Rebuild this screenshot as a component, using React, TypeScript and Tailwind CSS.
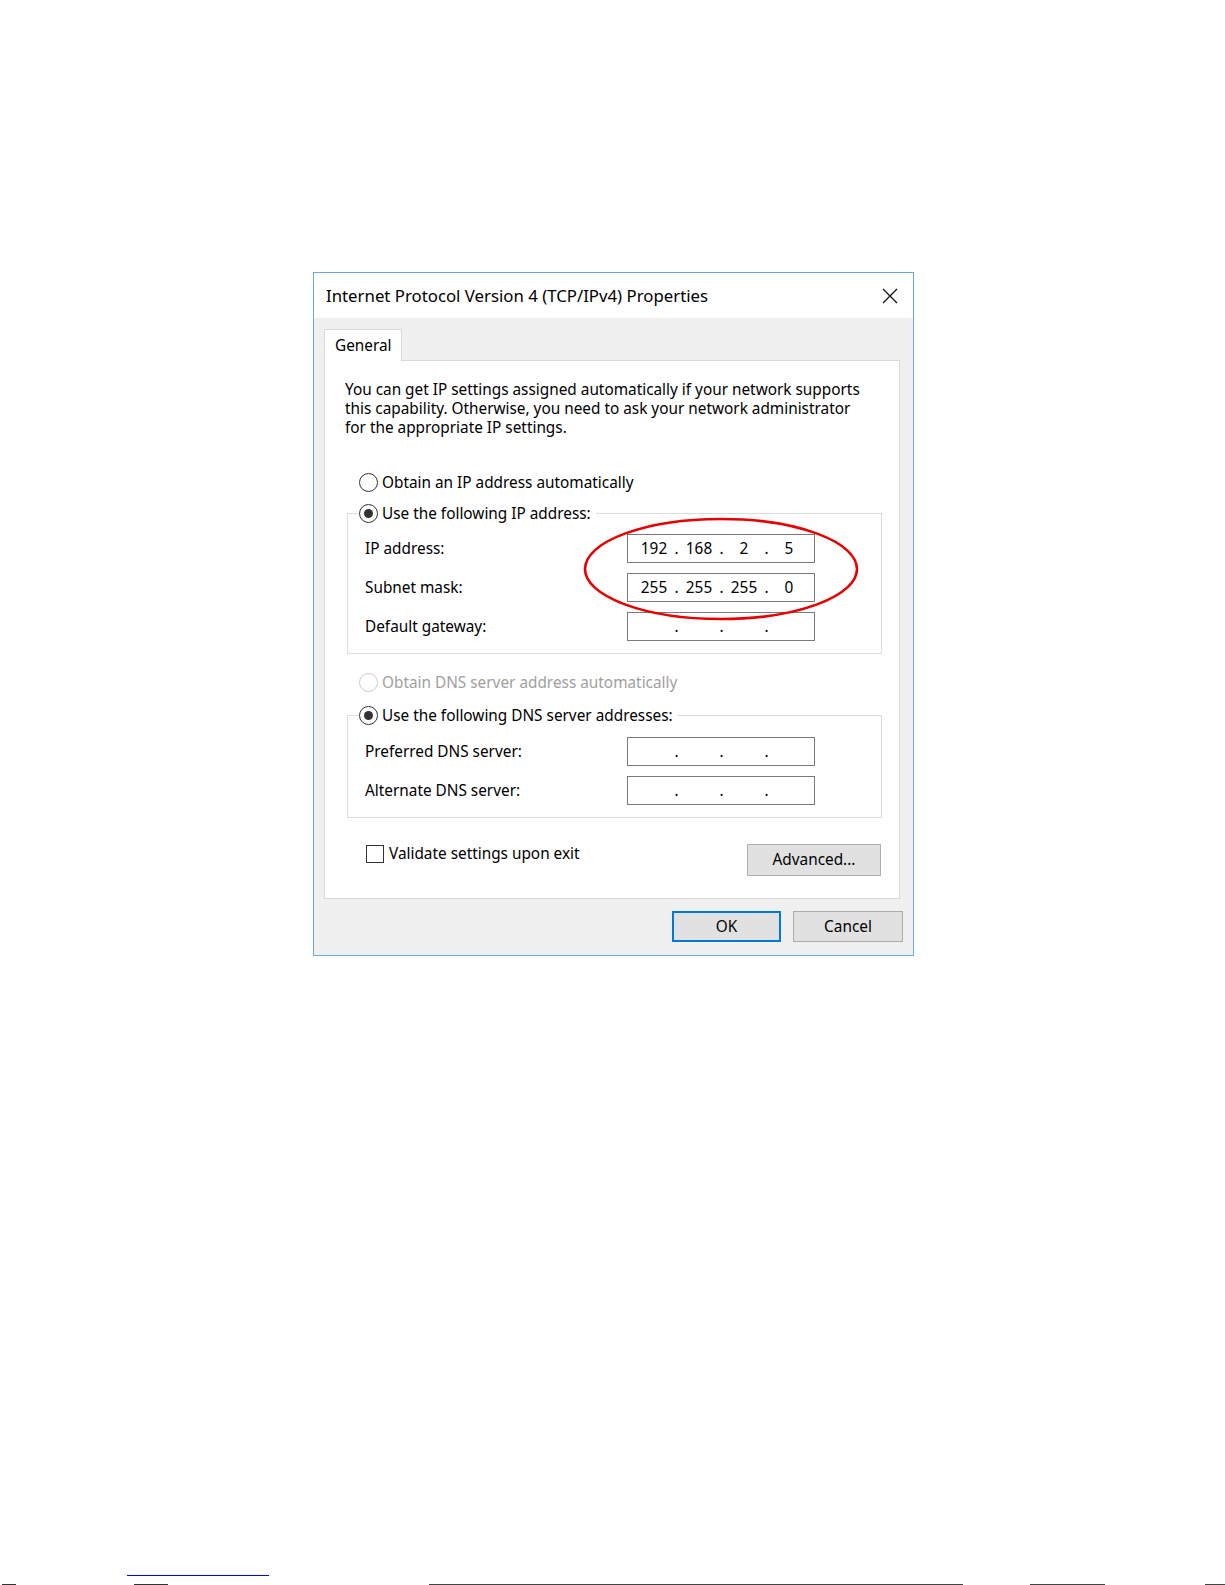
import React from "react";

const TITLE = "Internet Protocol Version 4 (TCP/IPv4) Properties";

function Radio({ checked = false, disabled = false }: { checked?: boolean; disabled?: boolean }) {
  return (
    <span
      className={
        disabled
          ? "flex h-[19px] w-[19px] shrink-0 items-center justify-center rounded-full border border-[#cccccc] bg-white"
          : "flex h-[19px] w-[19px] shrink-0 items-center justify-center rounded-full border border-[#333333] bg-white"
      }
    >
      {checked && <span className="h-[9px] w-[9px] rounded-full bg-[#333333]" />}
    </span>
  );
}

function IpBox({ parts }: { parts?: string[] }) {
  const p = parts ?? ["", "", "", ""];
  return (
    <div className="flex h-[29px] w-[188px] items-center border border-[#7a7a7a] bg-white pl-[8px]">
      {p.map((v, i) => (
        <React.Fragment key={i}>
          <span className="w-[36px] text-center">{v}</span>
          {i < 3 && <span className="w-[9px] text-center">.</span>}
        </React.Fragment>
      ))}
    </div>
  );
}

function Row({ label, parts }: { label: string; parts?: string[] }) {
  return (
    <div className="flex h-[29px] items-center">
      <span className="w-[262px]">{label}</span>
      <IpBox parts={parts} />
    </div>
  );
}

export default function App() {
  return (
    <div className="flex h-[1585px] w-full flex-col overflow-hidden bg-white pt-[272px] font-['Noto_Sans',sans-serif] text-[15.35px] text-black">
      <div className="relative ml-[313px] flex h-[684px] w-[601px] shrink-0 flex-col border border-[#6aaae4] bg-[#f0f0f0]">
        {/* title bar */}
        <div className="flex h-[45px] items-center justify-between bg-white pl-[12px] pr-[15px]">
          <span className="text-[16.8px]">{TITLE}</span>
          <svg width="16" height="16" viewBox="0 0 16 16">
            <path d="M1 1 L15 15 M15 1 L1 15" stroke="#111" strokeWidth="1.3" fill="none" />
          </svg>
        </div>

        <div className="flex flex-col pl-[10px] pr-[10px] pt-[11px]">
          {/* tab */}
          <div className="relative z-10 -mb-px flex h-[32px] w-[78px] items-center border border-b-0 border-[#d9d9d9] bg-white pl-[10px]">
            General
          </div>
          {/* panel */}
          <div className="mr-[3px] flex h-[539px] flex-col border border-[#d9d9d9] bg-white pl-[20px] pr-[17px] pt-[19px]">
            <p className="leading-[19px]">
              You can get IP settings assigned automatically if your network supports
              <br />
              this capability. Otherwise, you need to ask your network administrator
              <br />
              for the appropriate IP settings.
            </p>

            <div className="ml-[14px] mt-[35px] flex h-[20px] items-center gap-[4px]">
              <Radio />
              <span>Obtain an IP address automatically</span>
            </div>

            <fieldset className="ml-[2px] mt-[11px] border border-[#dcdcdc] pb-[12px]">
              <legend className="ml-[11px] flex h-[20px] items-center gap-[4px] pr-[5px]">
                <Radio checked />
                <span>Use the following IP address:</span>
              </legend>
              <div className="flex flex-col gap-[10px] pl-[17px] pt-[11px]">
                <Row label="IP address:" parts={["192", "168", "2", "5"]} />
                <Row label="Subnet mask:" parts={["255", "255", "255", "0"]} />
                <Row label="Default gateway:" />
              </div>
            </fieldset>

            <div className="ml-[14px] mt-[18px] flex h-[20px] items-center gap-[4px] text-[#a0a0a0]">
              <Radio disabled />
              <span>Obtain DNS server address automatically</span>
            </div>

            <fieldset className="ml-[2px] mt-[13px] border border-[#dcdcdc] pb-[12px]">
              <legend className="ml-[11px] flex h-[20px] items-center gap-[4px] pr-[5px]">
                <Radio checked />
                <span>Use the following DNS server addresses:</span>
              </legend>
              <div className="flex flex-col gap-[10px] pl-[17px] pt-[12px]">
                <Row label="Preferred DNS server:" />
                <Row label="Alternate DNS server:" />
              </div>
            </fieldset>

            <div className="mt-[26px] flex items-start justify-between">
              <div className="-mt-[2px] ml-[21px] flex items-center gap-[5px]">
                <span className="h-[18px] w-[18px] border border-[#333333] bg-white" />
                <span>Validate settings upon exit</span>
              </div>
              <button className="mr-[1px] flex h-[32px] w-[134px] items-center justify-center border border-[#adadad] bg-[#e1e1e1]">
                Advanced...
              </button>
            </div>
          </div>

          {/* buttons */}
          <div className="mt-[12px] flex justify-end gap-[12px]">
            <button className="flex h-[31px] w-[109px] items-center justify-center border-2 border-[#0078d7] bg-[#e1e1e1]">
              OK
            </button>
            <button className="flex h-[31px] w-[110px] items-center justify-center border border-[#adadad] bg-[#e1e1e1]">
              Cancel
            </button>
          </div>
        </div>

        {/* red annotation ellipse */}
        <svg className="pointer-events-none absolute left-[269px] top-[244px]" width="276" height="104" viewBox="0 0 276 104">
          <ellipse cx="138" cy="52" rx="136" ry="50" fill="none" stroke="#e60000" strokeWidth="2.6" />
        </svg>
      </div>

      {/* page footer remnants */}
      <div className="ml-[127px] mt-[619px] h-px w-[142px] shrink-0 bg-[#0000ff]" />
      <div className="mt-[8px] flex h-px shrink-0">
        <span className="ml-[2px] w-[14px] bg-[#333333]" />
        <span className="ml-[118px] w-[34px] bg-[#333333]" />
        <span className="ml-[261px] w-[534px] bg-[#444444]" />
        <span className="ml-[67px] w-[75px] bg-[#444444]" />
        <span className="ml-[100px] w-[20px] bg-[#444444]" />
      </div>
    </div>
  );
}
